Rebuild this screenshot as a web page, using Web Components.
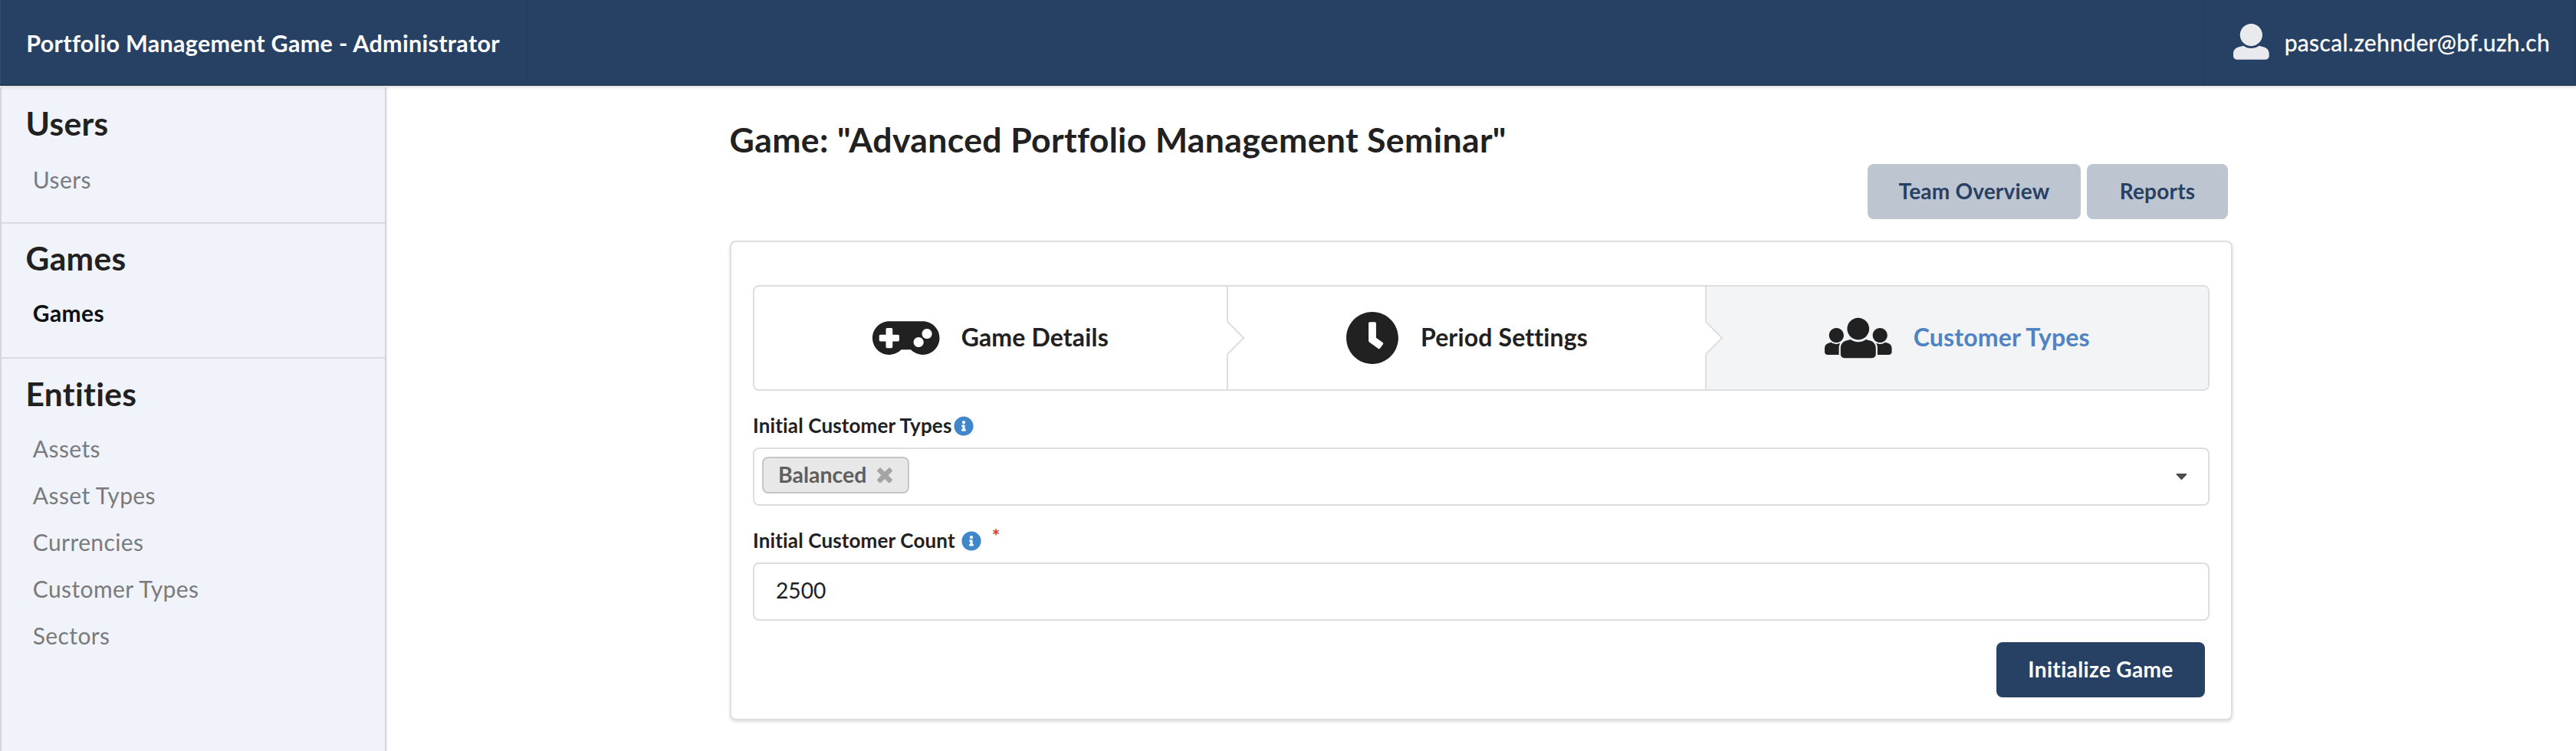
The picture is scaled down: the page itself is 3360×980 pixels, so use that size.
<!DOCTYPE html>
<html lang="en">
<head>
<meta charset="utf-8">
<title>Portfolio Management Game - Administrator</title>
<style>
html, body { margin: 0; height: 100%; background: #fff; }
body { font: 28px/40px Lato, "Liberation Sans", sans-serif; color: #212121; font-variant-ligatures: none; overflow: hidden; }
</style>
</head>
<body>
<pm-app></pm-app>
<script>
const ICONS = {
  user: [512, 'M256 0c88.366 0 160 71.634 160 160s-71.634 160-160 160S96 248.366 96 160 167.634 0 256 0zm183.283 333.821l-71.313-17.828c-74.923 53.89-165.738 41.864-223.94 0l-71.313 17.828C29.981 344.505 0 382.903 0 426.955V464c0 26.51 21.49 48 48 48h416c26.51 0 48-21.49 48-48v-37.045c0-44.052-29.981-82.45-72.717-93.134z'],
  gamepad: [640, 'M480 96H160C71.6 96 0 167.6 0 256s71.6 160 160 160c44.8 0 85.2-18.4 114.2-48h91.5c29 29.6 69.5 48 114.2 48 88.4 0 160-71.6 160-160S568.4 96 480 96zM256 276c0 6.6-5.4 12-12 12h-52v52c0 6.6-5.4 12-12 12h-40c-6.6 0-12-5.4-12-12v-52H76c-6.6 0-12-5.4-12-12v-40c0-6.6 5.4-12 12-12h52v-52c0-6.6 5.4-12 12-12h40c6.6 0 12 5.4 12 12v52h52c6.6 0 12 5.4 12 12v40zm184 68c-26.5 0-48-21.5-48-48s21.5-48 48-48 48 21.5 48 48-21.5 48-48 48zm80-80c-26.5 0-48-21.5-48-48s21.5-48 48-48 48 21.5 48 48-21.5 48-48 48z'],
  clock: [512, 'M256 8C119 8 8 119 8 256s111 248 248 248 248-111 248-248S393 8 256 8zm57.1 350.1L224.9 294c-3.1-2.3-4.9-5.9-4.9-9.7V116c0-6.6 5.4-12 12-12h48c6.6 0 12 5.4 12 12v137.7l63.5 46.2c5.4 3.9 6.5 11.4 2.6 16.8l-28.2 38.8c-3.9 5.3-11.4 6.5-16.8 2.6z'],
  users: [640, 'M320 64c57.99 0 105 47.01 105 105s-47.01 105-105 105-105-47.01-105-105S262.01 64 320 64zm113.463 217.366l-39.982-9.996c-49.168 35.365-108.766 27.473-146.961 0l-39.982 9.996C174.485 289.379 152 318.177 152 351.216V412c0 19.882 16.118 36 36 36h264c19.882 0 36-16.118 36-36v-60.784c0-33.039-22.485-61.837-54.537-69.85zM528 300c38.66 0 70-31.34 70-70s-31.34-70-70-70-70 31.34-70 70 31.34 70 70 70zm-416 0c38.66 0 70-31.34 70-70s-31.34-70-70-70-70 31.34-70 70 31.34 70 70 70zm24 112v-60.784c0-16.551 4.593-32.204 12.703-45.599-29.988 14.72-63.336 8.708-85.69-7.37l-26.655 6.664C14.99 310.252 0 329.452 0 351.477V392c0 13.255 10.745 24 24 24h112.169a52.417 52.417 0 0 1-.169-4zm467.642-107.09l-26.655-6.664c-27.925 20.086-60.89 19.233-85.786 7.218C499.369 318.893 504 334.601 504 351.216V412c0 1.347-.068 2.678-.169 4H616c13.255 0 24-10.745 24-24v-40.523c0-22.025-14.99-41.225-36.358-46.567z'],
  info: [512, 'M256 8C119.043 8 8 119.083 8 256c0 136.997 111.043 248 248 248s248-111.003 248-248C504 119.083 392.957 8 256 8zm0 110c23.196 0 42 18.804 42 42s-18.804 42-42 42-42-18.804-42-42 18.804-42 42-42zm56 254c0 6.627-5.373 12-12 12h-88c-6.627 0-12-5.373-12-12v-24c0-6.627 5.373-12 12-12h12v-64h-12c-6.627 0-12-5.373-12-12v-24c0-6.627 5.373-12 12-12h64c6.627 0 12 5.373 12 12v100h12c6.627 0 12 5.373 12 12v24z'],
  times: [384, 'M323.1 441l53.9-53.9c9.4-9.4 9.4-24.5 0-33.9L279.8 256l97.2-97.2c9.4-9.4 9.4-24.5 0-33.9L323.1 71c-9.4-9.4-24.5-9.4-33.9 0L192 168.2 94.8 71c-9.4-9.4-24.5-9.4-33.9 0L7 124.9c-9.4 9.4-9.4 24.5 0 33.9l97.2 97.2L7 353.2c-9.4 9.4-9.4 24.5 0 33.9L60.9 441c9.4 9.4 24.5 9.4 33.9 0l97.2-97.2 97.2 97.2c9.3 9.3 24.5 9.3 33.9 0z'],
  caret: [320, 'M31.3 192h257.3c17.8 0 26.7 21.5 14.1 34.1L174.1 354.7c-7.8 7.8-20.5 7.8-28.3 0L17.2 226.1C4.6 213.5 13.5 192 31.3 192z']
};

function define(name, css, html) {
  const template = document.createElement('template');
  template.innerHTML = `<style>:host,*{box-sizing:border-box}${css}</style>${html}`;
  customElements.define(name, class extends HTMLElement {
    constructor() {
      super();
      this.attachShadow({ mode: 'open' }).append(template.content.cloneNode(true));
    }
  });
}

customElements.define('pm-icon', class extends HTMLElement {
  connectedCallback() {
    const [w, d] = ICONS[this.getAttribute('name')];
    const size = this.getAttribute('size');
    const root = this.shadowRoot || this.attachShadow({ mode: 'open' });
    root.innerHTML = `<style>:host{display:block;flex:none}svg{display:block;fill:currentColor}</style>
      <svg viewBox="0 0 ${w} 512" width="${size * w / 512}" height="${size}"><path d="${d}"/></svg>`;
  }
});

define('pm-header', `
  :host { display: flex; justify-content: space-between; height: 112px; background: #274165; color: #fff;
    border-bottom: 2px solid #253b5b; box-shadow: 0 2px 4px rgba(34,36,38,.15); border-left: 1px solid #344c6f; position: relative; z-index: 1; }
  .brand { width: 687px; padding: 36px 0 0 33.3px; border-right: 2px solid #253d61; font-weight: 700; font-size: 30.5px; letter-spacing: .3px; white-space: nowrap; }
  .account { display: flex; width: 486px; padding: 31px 0 0 37px; border-left: 2px solid #253d61; border-right: 2px solid #253d61; }
  pm-icon { color: #e9eaee; }
  .mail { padding: 4px 0 0 20px; font-size: 30px; letter-spacing: .35px; white-space: nowrap; -webkit-text-stroke: .3px #fff; }`,
  `<div class="brand"><slot name="brand"></slot></div>
   <div class="account"><pm-icon name="user" size="46.7"></pm-icon><div class="mail"><slot></slot></div></div>`);

define('pm-nav-group', `
  :host { display: block; height: 176px; padding: 20px 0 0 31.6px; border-bottom: 2px solid #d9dce1; }
  :host([first]) { height: 178px; padding-top: 22px; --gap: 18px; }
  :host([last]) { border: 0; height: auto; padding-top: 21px; }
  h2 { margin: 0 0 var(--gap, 16px); font-size: 42.5px; letter-spacing: .3px; line-height: 50px; font-weight: 700; }
  .items { display: flex; flex-direction: column; padding-left: 9.2px; }`,
  `<h2><slot name="title"></slot></h2><div class="items"><slot></slot></div>`);

define('pm-nav-item', `
  :host { display: block; height: 61px; font-size: 30px; letter-spacing: .4px; line-height: 60px; color: #797b7e; }
  :host([active]) { font-weight: 700; color: #0e0f10; }`, `<slot></slot>`);

define('pm-sidebar', `
  :host { display: block; width: 504px; background: #f0f3f9; border: solid #d3d6dc; border-width: 0 2px; box-shadow: 0 2px 4px rgba(34,36,38,.1); }`,
  `<slot></slot>`);

define('pm-button', `
  :host { display: block; height: 72px; border-radius: 8px; font-weight: 700; line-height: 70px; letter-spacing: .2px; text-align: center; white-space: nowrap; background: #bdc5d1; color: #274165; }
  :host([primary]) { background: #274165; color: #fff; letter-spacing: .35px; }`, `<slot></slot>`);

define('pm-step', `
  :host { display: flex; align-items: center; justify-content: center; gap: 28px; position: relative; height: 134px; border-right: 2px solid #dededf; font-size: 32px; letter-spacing: .15px; font-weight: 700; }
  :host([active]) { background: #f3f4f6; color: #4f83c3; border: 0; border-radius: 0 6px 6px 0; }
  ::slotted(pm-icon) { color: #212121; }
  .arrow { position: absolute; top: 50%; right: -1px; width: 32px; height: 32px; transform: translate(50%, -50%) rotate(-45deg); background: #fff; border: solid #dededf; border-width: 0 2px 2px 0; z-index: 2; }
  :host([active]) .arrow { display: none; }
  .label { padding-bottom: 3px; white-space: nowrap; }`,
  `<slot name="icon"></slot><span class="label"><slot></slot></span><i class="arrow"></i>`);

define('pm-steps', `
  :host { display: grid; grid-template-columns: 618px 624px 1fr; height: 138px; border: 2px solid #dededf; border-radius: 8px; }`, `<slot></slot>`);

define('pm-field', `
  :host { display: block; }
  .label { display: flex; height: 36px; font-size: 26px; letter-spacing: .15px; line-height: 34px; font-weight: 700; }
  .label pm-icon { color: #4086cb; margin: 5px 0 0 var(--info-gap, 2.6px); }
  .req { display: none; color: #cc3a33; font-size: 25px; margin: -6px 0 0 14px; }
  :host([required]) .req { display: block; }
  .box { display: flex; height: 76px; margin-top: 10px; border: 2px solid #dededf; border-radius: 8px; }`,
  `<div class="label"><slot name="label"></slot><pm-icon name="info" size="26"></pm-icon><span class="req">*</span></div>
   <div class="box"><slot></slot></div>`);

define('pm-select', `
  :host { display: flex; flex: 1; justify-content: space-between; padding: 10px 27px 0 10px; }
  pm-icon { color: #4c4c4c; margin-top: 13px; }`, `<slot></slot><pm-icon name="caret" size="24"></pm-icon>`);

define('pm-chip', `
  :host { display: flex; height: 48px; width: 192px; padding-left: 19px; border: 2px solid #c6c6c6; border-radius: 8px; background: #e8e8e8; color: #5f5f5f; font-weight: 700; line-height: 42px; font-size: 28.5px; }
  .t { width: 129px; white-space: nowrap; }
  pm-icon { color: #a4a4a4; margin-top: 9px; }`, `<span class="t"><slot></slot></span><pm-icon name="times" size="26.7"></pm-icon>`);

define('pm-value', `:host { display: block; padding-left: 28px; font-size: 28.2px; line-height: 69px; }`, `<slot></slot>`);

define('pm-card', `
  :host { display: block; height: 626px; padding: 56px 28px 0; border: 2px solid #dededf; border-radius: 8px; box-shadow: 0 2px 4px rgba(34,36,38,.15); background: #fff; }`,
  `<slot></slot>`);

define('pm-app', `
  :host { display: flex; flex-direction: column; height: 100vh; }
  .body { display: flex; flex: 1; min-height: 0; padding-top: 2px; }
  pm-sidebar { flex: none; margin-bottom: -10px; }
  main { flex: none; width: 1960px; margin-left: 448px; padding-top: 38px; }
  h1 { margin: 0 0 2px -.5px; font-size: 44.6px; letter-spacing: .35px; line-height: 60px; font-weight: 700; white-space: nowrap; }
  .actions { display: flex; justify-content: flex-end; gap: 8px; padding-right: 6px; margin-bottom: 28px; }
  pm-steps { margin-bottom: 28px; }
  pm-field + pm-field { margin-top: 28px; --info-gap: 8.1px; }
  .submit { display: flex; justify-content: flex-end; padding: 28px 6px 0 0; }
  .w278 { width: 278px; } .w184 { width: 184px; } .w272 { width: 272px; }`,
  `<pm-header><span slot="brand">Portfolio Management Game - Administrator</span>pascal.zehnder@bf.uzh.ch</pm-header>
  <div class="body">
    <pm-sidebar>
      <pm-nav-group first><span slot="title">Users</span><pm-nav-item>Users</pm-nav-item></pm-nav-group>
      <pm-nav-group><span slot="title">Games</span><pm-nav-item active>Games</pm-nav-item></pm-nav-group>
      <pm-nav-group last><span slot="title">Entities</span><pm-nav-item>Assets</pm-nav-item><pm-nav-item>Asset Types</pm-nav-item><pm-nav-item>Currencies</pm-nav-item><pm-nav-item>Customer Types</pm-nav-item><pm-nav-item>Sectors</pm-nav-item></pm-nav-group>
    </pm-sidebar>
    <main>
      <h1>Game: "Advanced Portfolio Management Seminar"</h1>
      <div class="actions"><pm-button class="w278">Team Overview</pm-button><pm-button class="w184">Reports</pm-button></div>
      <pm-card>
        <pm-steps>
          <pm-step><pm-icon slot="icon" name="gamepad" size="70"></pm-icon>Game Details</pm-step>
          <pm-step><pm-icon slot="icon" name="clock" size="70"></pm-icon>Period Settings</pm-step>
          <pm-step active><pm-icon slot="icon" name="users" size="70"></pm-icon>Customer Types</pm-step>
        </pm-steps>
        <pm-field><span slot="label">Initial Customer Types</span><pm-select><pm-chip>Balanced</pm-chip></pm-select></pm-field>
        <pm-field required><span slot="label">Initial Customer Count</span><pm-value>2500</pm-value></pm-field>
        <div class="submit"><pm-button primary class="w272">Initialize Game</pm-button></div>
      </pm-card>
    </main>
  </div>`);
</script>
</body>
</html>
